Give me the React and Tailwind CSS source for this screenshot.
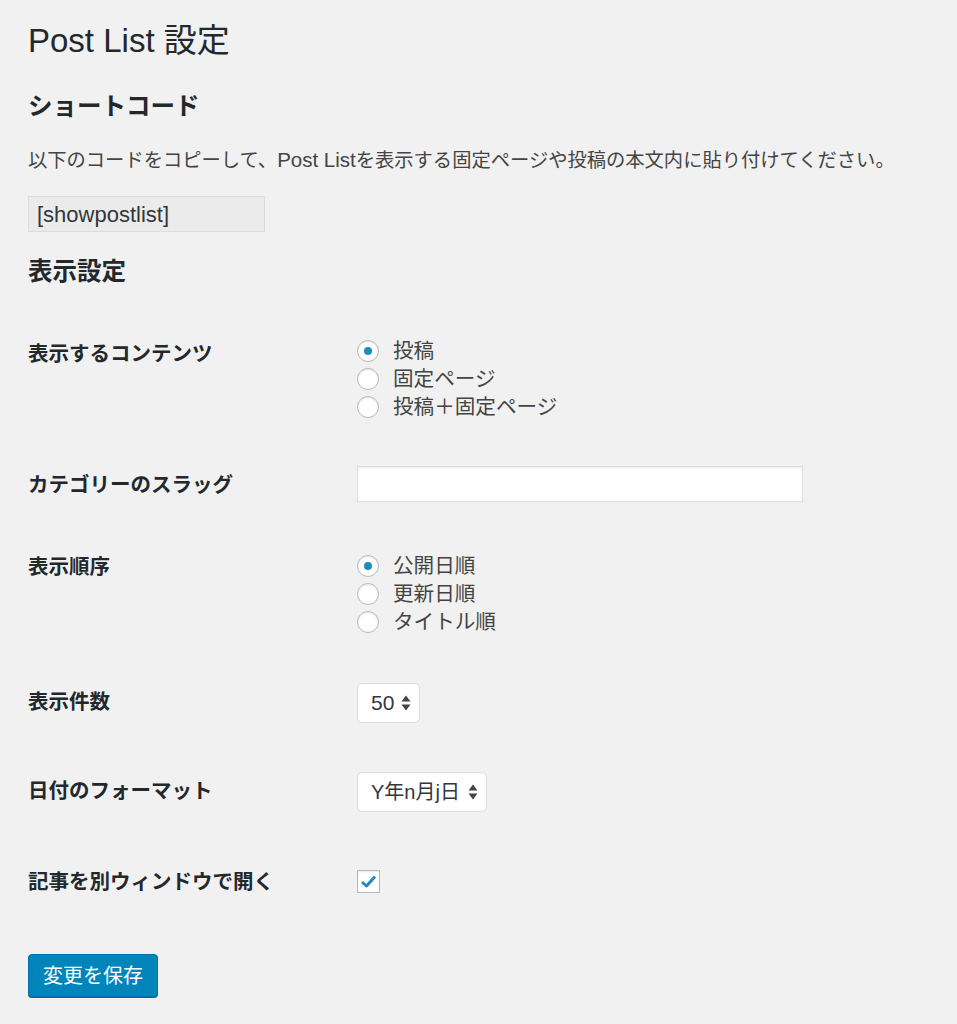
import React from "react";

const FONT = "[font-family:'Liberation_Sans','Noto_Sans_CJK_JP',sans-serif]";

function Radio({ checked, label }) {
  return (
    <label className="flex h-[28px] items-center">
      <span className="flex h-[22px] w-[22px] shrink-0 items-center justify-center rounded-full border border-[#b4b9be] bg-white shadow-[inset_0_1px_2px_rgba(0,0,0,0.1)]">
        {checked && <span className="h-[8px] w-[8px] rounded-full bg-[#1e8cbe]" />}
      </span>
      <span className="ml-[14px] text-[20.6px] leading-[28px] text-[#444]">{label}</span>
    </label>
  );
}

function Arrows() {
  return (
    <svg width="10" height="16" viewBox="0 0 10 16" className="shrink-0">
      <path d="M5 0.5 L9.5 6.5 L0.5 6.5 Z" fill="#444" />
      <path d="M5 15.5 L9.5 9.5 L0.5 9.5 Z" fill="#444" />
    </svg>
  );
}

function Select({ value, w, size }) {
  return (
    <div
      className={`flex h-[40px] items-center justify-between rounded-[5px] border border-[#dcdcdc] bg-white pl-[13px] pr-[8px] text-[#32373c] ${size} ${w}`}
    >
      <span>{value}</span>
      <Arrows />
    </div>
  );
}

function Row({ label, mt, labelMt, children }) {
  return (
    <div className={`grid grid-cols-[329px_1fr] ${mt}`}>
      <div className={`text-[20.5px] font-bold leading-[28px] text-[#23282d] ${labelMt}`}>{label}</div>
      <div>{children}</div>
    </div>
  );
}

export default function App() {
  return (
    <div className={`min-h-[1024px] w-[957px] bg-[#f1f1f1] pl-[28px] pt-[21px] ${FONT}`}>
      <h1 className="h-[40px] text-[33px] leading-[40px] text-[#23282d]">Post List 設定</h1>
      <h2 className="mt-[30px] h-[32px] text-[24.5px] font-bold leading-[32px] text-[#23282d]">ショートコード</h2>
      <p className="mt-[23px] h-[28px] whitespace-nowrap text-[19.3px] leading-[28px] text-[#444]">
        以下のコードをコピーして、<span className="text-[20.5px]">Post List</span>を表示する固定ページや投稿の本文内に貼り付けてください。
      </p>
      <div className="mt-[22px] flex h-[36px] w-[237px] items-center border border-[#dcdcdc] bg-[#ebebeb] pl-[8px] text-[22px] text-[#32373c]">
        [showpostlist]
      </div>
      <h2 className="mt-[24px] h-[32px] text-[24.5px] font-bold leading-[32px] text-[#23282d]">表示設定</h2>

      <Row label="表示するコンテンツ" mt="mt-[49px]" labelMt="mt-[3px]">
        <Radio checked label="投稿" />
        <Radio label="固定ページ" />
        <Radio label="投稿＋固定ページ" />
      </Row>

      <Row label="カテゴリーのスラッグ" mt="mt-[45px]" labelMt="mt-[5px]">
        <div className="h-[36px] w-[446px] border border-[#dcdcdc] bg-white shadow-[inset_0_1px_2px_rgba(0,0,0,0.07)]" />
      </Row>

      <Row label="表示順序" mt="mt-[50px]" labelMt="mt-[1px]">
        <Radio checked label="公開日順" />
        <Radio label="更新日順" />
        <Radio label="タイトル順" />
      </Row>

      <Row label="表示件数" mt="mt-[47px]" labelMt="mt-[5px]">
        <Select value="50" w="w-[63px]" size="text-[21px]" />
      </Row>

      <Row label="日付のフォーマット" mt="mt-[49px]" labelMt="mt-[5px]">
        <Select value="Y年n月j日" w="w-[130px]" size="text-[20px]" />
      </Row>

      <Row label="記事を別ウィンドウで開く" mt="mt-[56px]" labelMt="mt-0">
        <div className="mt-[2px] flex h-[23px] w-[23px] items-center justify-center border border-[#b4b9be] bg-white shadow-[inset_0_1px_2px_rgba(0,0,0,0.1)]">
          <svg width="17" height="15" viewBox="0 0 17 15">
            <path d="M2 8 L6.5 12 L15 2.5" fill="none" stroke="#1e8cbe" strokeWidth="3" strokeLinejoin="round" />
          </svg>
        </div>
      </Row>

      <button className="mt-[58px] flex h-[43px] w-[130px] items-center justify-center rounded-[4px] border border-[#0073aa] bg-[#0085ba] text-[20px] text-white shadow-[0_1px_0_#006799]">
        変更を保存
      </button>
    </div>
  );
}
